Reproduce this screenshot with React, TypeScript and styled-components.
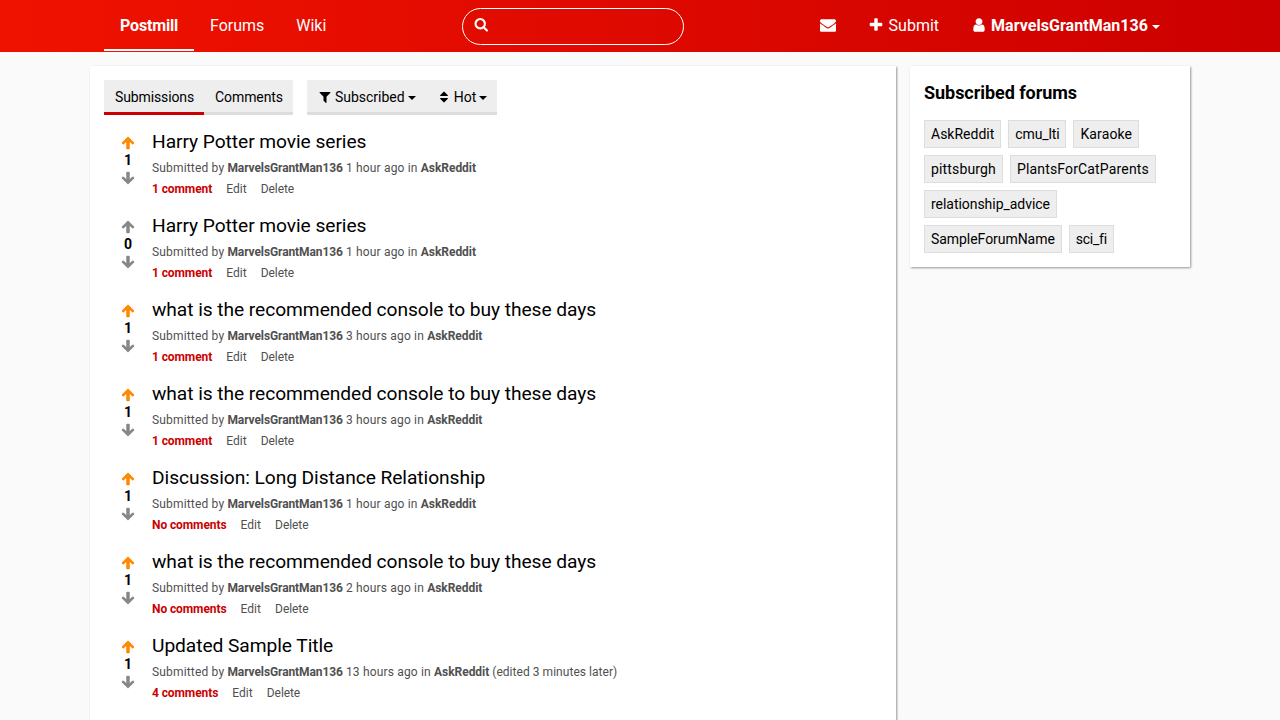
import React from "react";
import styled, { createGlobalStyle, css } from "styled-components";

const GlobalStyle = createGlobalStyle`
  * { box-sizing: border-box; }
  body { margin: 0; background: #fafafa; color: #000; font: 14px/21px Roboto, sans-serif; height: 720px; overflow: hidden; }
  a { color: inherit; text-decoration: none; }
  h1, h2 { margin: 0; font-weight: 400; }
`;

const paths = {
  search: "M1216 832q0-185-131.5-316.5t-316.5-131.5-316.5 131.5-131.5 316.5 131.5 316.5 316.5 131.5 316.5-131.5 131.5-316.5zm512 832q0 52-38 90t-90 38q-54 0-90-38l-343-342q-179 124-399 124-143 0-273.5-55.5t-225-150-150-225-55.5-273.5 55.5-273.5 150-225 225-150 273.5-55.5 273.5 55.5 225 150 150 225 55.5 273.5q0 220-124 399l343 343q37 37 37 90z",
  mail: "M1792 710v794q0 66-47 113t-113 47h-1472q-66 0-113-47t-47-113v-794q44 49 101 87 362 246 497 345 57 42 92.5 65.5t94.5 48 110 24.5h2q51 0 110-24.5t94.5-48 92.5-65.5q170-123 498-345 57-39 100-87zm0-294q0 79-49 151t-122 123q-376 261-468 325-10 7-42.5 31t-54 38.5-52 32.5-57.5 27-50 9h-2q-23 0-50-9t-57.5-27-52-32.5-54-38.5-42.5-31q-91-64-262-182.5t-205-142.5q-62-42-117-115.5t-55-136.5q0-78 41.5-130t118.5-52h1472q65 0 112.5 47t47.5 113z",
  plus: "M1600 736v192q0 40-28 68t-68 28h-416v416q0 40-28 68t-68 28h-192q-40 0-68-28t-28-68v-416h-416q-40 0-68-28t-28-68v-192q0-40 28-68t68-28h416v-416q0-40 28-68t68-28h192q40 0 68 28t28 68v416h416q40 0 68 28t28 68z",
  user: "M1536 1399q0 109-62.5 187t-150.5 78h-854q-88 0-150.5-78t-62.5-187q0-85 8.5-160.5t31.5-152 58.5-131 94-89 134.5-34.5q131 128 313 128t313-128q76 0 134.5 34.5t94 89 58.5 131 31.5 152 8.5 160.5zm-256-887q0 159-112.5 271.5t-271.5 112.5-271.5-112.5-112.5-271.5 112.5-271.5 271.5-112.5 271.5 112.5 112.5 271.5z",
  filter: "M1595 295q17 41-14 70l-493 493v742q0 42-39 59-13 5-25 5-27 0-45-19l-256-256q-19-19-19-45v-486l-493-493q-31-29-14-70 17-39 59-39h1280q42 0 59 39z",
  sort: "M1408 1088q0 26-19 45l-448 448q-19 19-45 19t-45-19l-448-448q-19-19-19-45t19-45 45-19h896q26 0 45 19t19 45zm0-384q0 26-19 45t-45 19h-896q-26 0-45-19t-19-45 19-45l448-448q19-19 45-19t45 19l448 448q19 19 19 45z",
  up: "M896 60L1675 845Q1725 905 1675 965L1570 1070Q1505 1120 1440 1070L1120 760V1590Q1105 1690 1015 1700H777Q687 1690 672 1590V760L352 1070Q287 1120 222 1070L117 965Q67 905 117 845Z",
};

const Svg = styled.svg<{ $size: number }>`
  display: block;
  flex: none;
  width: ${(p) => p.$size}px;
  height: ${(p) => p.$size}px;
  fill: currentColor;
`;

function Icon({ name, size = 16, className }: { name: keyof typeof paths; size?: number; className?: string }) {
  return (
    <Svg $size={size} viewBox="0 0 1792 1792" className={className} aria-hidden>
      <path d={paths[name]} />
    </Svg>
  );
}

const Caret = styled.span<{ $gap: number }>`
  border: 4px solid transparent;
  border-top-color: currentColor;
  border-bottom: 0;
  margin-left: ${(p) => p.$gap}px;
  margin-top: 2px;
`;

const Header = styled.header`
  height: 52px;
  padding: 0 104px;
  display: flex;
  justify-content: space-between;
  color: #fff;
  font-size: 16px;
  background: linear-gradient(to right, #f01200, #c00);
`;

const NavGroup = styled.nav`
  display: flex;
`;

const NavLink = styled.a<{ $active?: boolean; $bold?: boolean; $track?: number }>`
  height: 51px;
  padding: 2px 16px 0;
  display: flex;
  align-items: center;
  border-bottom: 2px solid ${(p) => (p.$active ? "#fff" : "transparent")};
  font-weight: ${(p) => (p.$bold ? 700 : 400)};
  letter-spacing: ${(p) => p.$track ?? 0}px;
`;

const NavIcon = styled(Icon)`
  margin-bottom: 2px;
`;

const NavText = styled.span<{ $gap: number }>`
  margin-left: ${(p) => p.$gap}px;
`;

const Search = styled.form`
  width: 222px;
  height: 37px;
  margin: 8px 0 0 1px;
  padding: 8px 10.5px;
  border: 1px solid #fff;
  border-radius: 19px;
`;

const Page = styled.div`
  width: 1100px;
  height: 654px;
  margin: 14px auto 0;
  display: flex;
  align-items: flex-start;
  gap: 14px;
`;

const panel = css`
  background: #fff;
  box-shadow: 1px 1px 2px rgba(0, 0, 0, 0.4);
`;

const Main = styled.main`
  ${panel}
  width: 806px;
  height: 100%;
  padding: 14px 14px 0;
`;

const Sidebar = styled.aside`
  ${panel}
  width: 280px;
  padding: 14px;
`;

const SideTitle = styled.h2`
  font-size: 18px;
  line-height: 25px;
  font-weight: 700;
  letter-spacing: -0.05px;
  margin-bottom: 15px;
`;

const Tags = styled.div`
  display: flex;
  flex-wrap: wrap;
  gap: 7px;
`;

const Tag = styled.a<{ $track: number }>`
  height: 28px;
  padding: 0 6px;
  line-height: 26px;
  letter-spacing: ${(p) => p.$track}px;
  background: #eee;
  border: 1px solid #ddd;
`;

const Toolbar = styled.div`
  display: flex;
  gap: 14px;
  margin-bottom: 14px;
`;

const TabGroup = styled.div`
  display: flex;
  background: #eee;
`;

const Tab = styled.a<{ $active?: boolean; $track?: number }>`
  height: 35px;
  padding: 2px 10px 0 11px;
  display: flex;
  align-items: center;
  letter-spacing: ${(p) => p.$track ?? 0}px;
  border-bottom: 3px solid ${(p) => (p.$active ? "#c00" : "#ddd")};
`;

const TabText = styled.span`
  margin-left: 3px;
`;

const Post = styled.article`
  display: flex;
  height: 70px;
  margin-bottom: 14px;
`;

const Votes = styled.div`
  width: 48px;
  padding-top: 7px;
  display: flex;
  flex-direction: column;
  align-items: center;
  font-weight: 700;
  line-height: 14px;
`;

const VoteArrow = styled(Icon)<{ $on?: boolean; $down?: boolean }>`
  color: ${(p) => (p.$on ? "#f80" : "#888")};
  transform: ${(p) => (p.$down ? "rotate(180deg)" : "none")};
`;

const Score = styled.span`
  margin: 3px 0 4px;
`;

const Title = styled.h1`
  font-size: 19.2px;
  line-height: 26px;
  letter-spacing: -0.06px;
`;

const Meta = styled.p`
  margin: 5px 0 0;
  font-size: 12px;
  line-height: 17px;
  letter-spacing: 0.17px;
  color: #505050;
`;

const Author = styled.b`
  letter-spacing: -0.1px;
`;

const ForumName = styled.b`
  letter-spacing: -0.04px;
`;

const Edited = styled.span`
  letter-spacing: 0.04px;
`;

const Actions = styled.div`
  display: flex;
  gap: 14px;
  margin-top: 4px;
  font-size: 12px;
  line-height: 17px;
  color: #505050;
`;

const Action = styled.a`
  letter-spacing: 0.07px;

  &:last-child {
    letter-spacing: -0.08px;
  }
`;

const Comments = styled.a`
  color: #c00;
  font-weight: 700;
  letter-spacing: -0.09px;
`;

const HP = "Harry Potter movie series";
const CONSOLE = "what is the recommended console to buy these days";

const posts = [
  { title: HP, score: 1, age: "1 hour ago", comments: "1 comment" },
  { title: HP, score: 0, age: "1 hour ago", comments: "1 comment" },
  { title: CONSOLE, score: 1, age: "3 hours ago", comments: "1 comment" },
  { title: CONSOLE, score: 1, age: "3 hours ago", comments: "1 comment" },
  { title: "Discussion: Long Distance Relationship", score: 1, age: "1 hour ago", comments: "No comments" },
  { title: CONSOLE, score: 1, age: "2 hours ago", comments: "No comments" },
  { title: "Updated Sample Title", score: 1, age: "13 hours ago", comments: "4 comments", edited: " (edited 3 minutes later)" },
];

const forums = [
  { name: "AskReddit", track: 0 },
  { name: "cmu_lti", track: -0.13 },
  { name: "Karaoke", track: 0.13 },
  { name: "pittsburgh", track: 0.15 },
  { name: "PlantsForCatParents", track: 0.16 },
  { name: "relationship_advice", track: -0.04 },
  { name: "SampleForumName", track: -0.05 },
  { name: "sci_fi", track: -0.25 },
];

export default function App() {
  return (
    <>
      <GlobalStyle />
      <Header>
        <NavGroup>
          <NavLink $active $bold $track={-0.17}>Postmill</NavLink>
          <NavLink $track={-0.04}>Forums</NavLink>
          <NavLink>Wiki</NavLink>
        </NavGroup>
        <Search><Icon name="search" size={14.5} /></Search>
        <NavGroup>
          <NavLink><NavIcon name="mail" /></NavLink>
          <NavLink><NavIcon name="plus" /><NavText $gap={5}>Submit</NavText></NavLink>
          <NavLink $bold $track={0.04}><NavIcon name="user" /><NavText $gap={4}>MarvelsGrantMan136</NavText><Caret $gap={4} /></NavLink>
        </NavGroup>
      </Header>
      <Page>
        <Main>
          <Toolbar>
            <TabGroup>
              <Tab $active $track={-0.12}>Submissions</Tab>
              <Tab $track={-0.1}>Comments</Tab>
            </TabGroup>
            <TabGroup>
              <Tab><Icon name="filter" size={14} /><TabText>Subscribed</TabText><Caret $gap={3} /></Tab>
              <Tab><Icon name="sort" size={14} /><TabText>Hot</TabText><Caret $gap={3} /></Tab>
            </TabGroup>
          </Toolbar>
          {posts.map((p, i) => (
            <Post key={i}>
              <Votes>
                <VoteArrow name="up" size={14} $on={p.score > 0} />
                <Score>{p.score}</Score>
                <VoteArrow name="up" size={14} $down />
              </Votes>
              <div>
                <Title>{p.title}</Title>
                <Meta>
                  Submitted by <Author>MarvelsGrantMan136</Author> {p.age} in <ForumName>AskReddit</ForumName>
                  {p.edited && <Edited>{p.edited}</Edited>}
                </Meta>
                <Actions>
                  <Comments>{p.comments}</Comments>
                  <Action>Edit</Action>
                  <Action>Delete</Action>
                </Actions>
              </div>
            </Post>
          ))}
        </Main>
        <Sidebar>
          <SideTitle>Subscribed forums</SideTitle>
          <Tags>{forums.map((f) => <Tag key={f.name} $track={f.track}>{f.name}</Tag>)}</Tags>
        </Sidebar>
      </Page>
    </>
  );
}
